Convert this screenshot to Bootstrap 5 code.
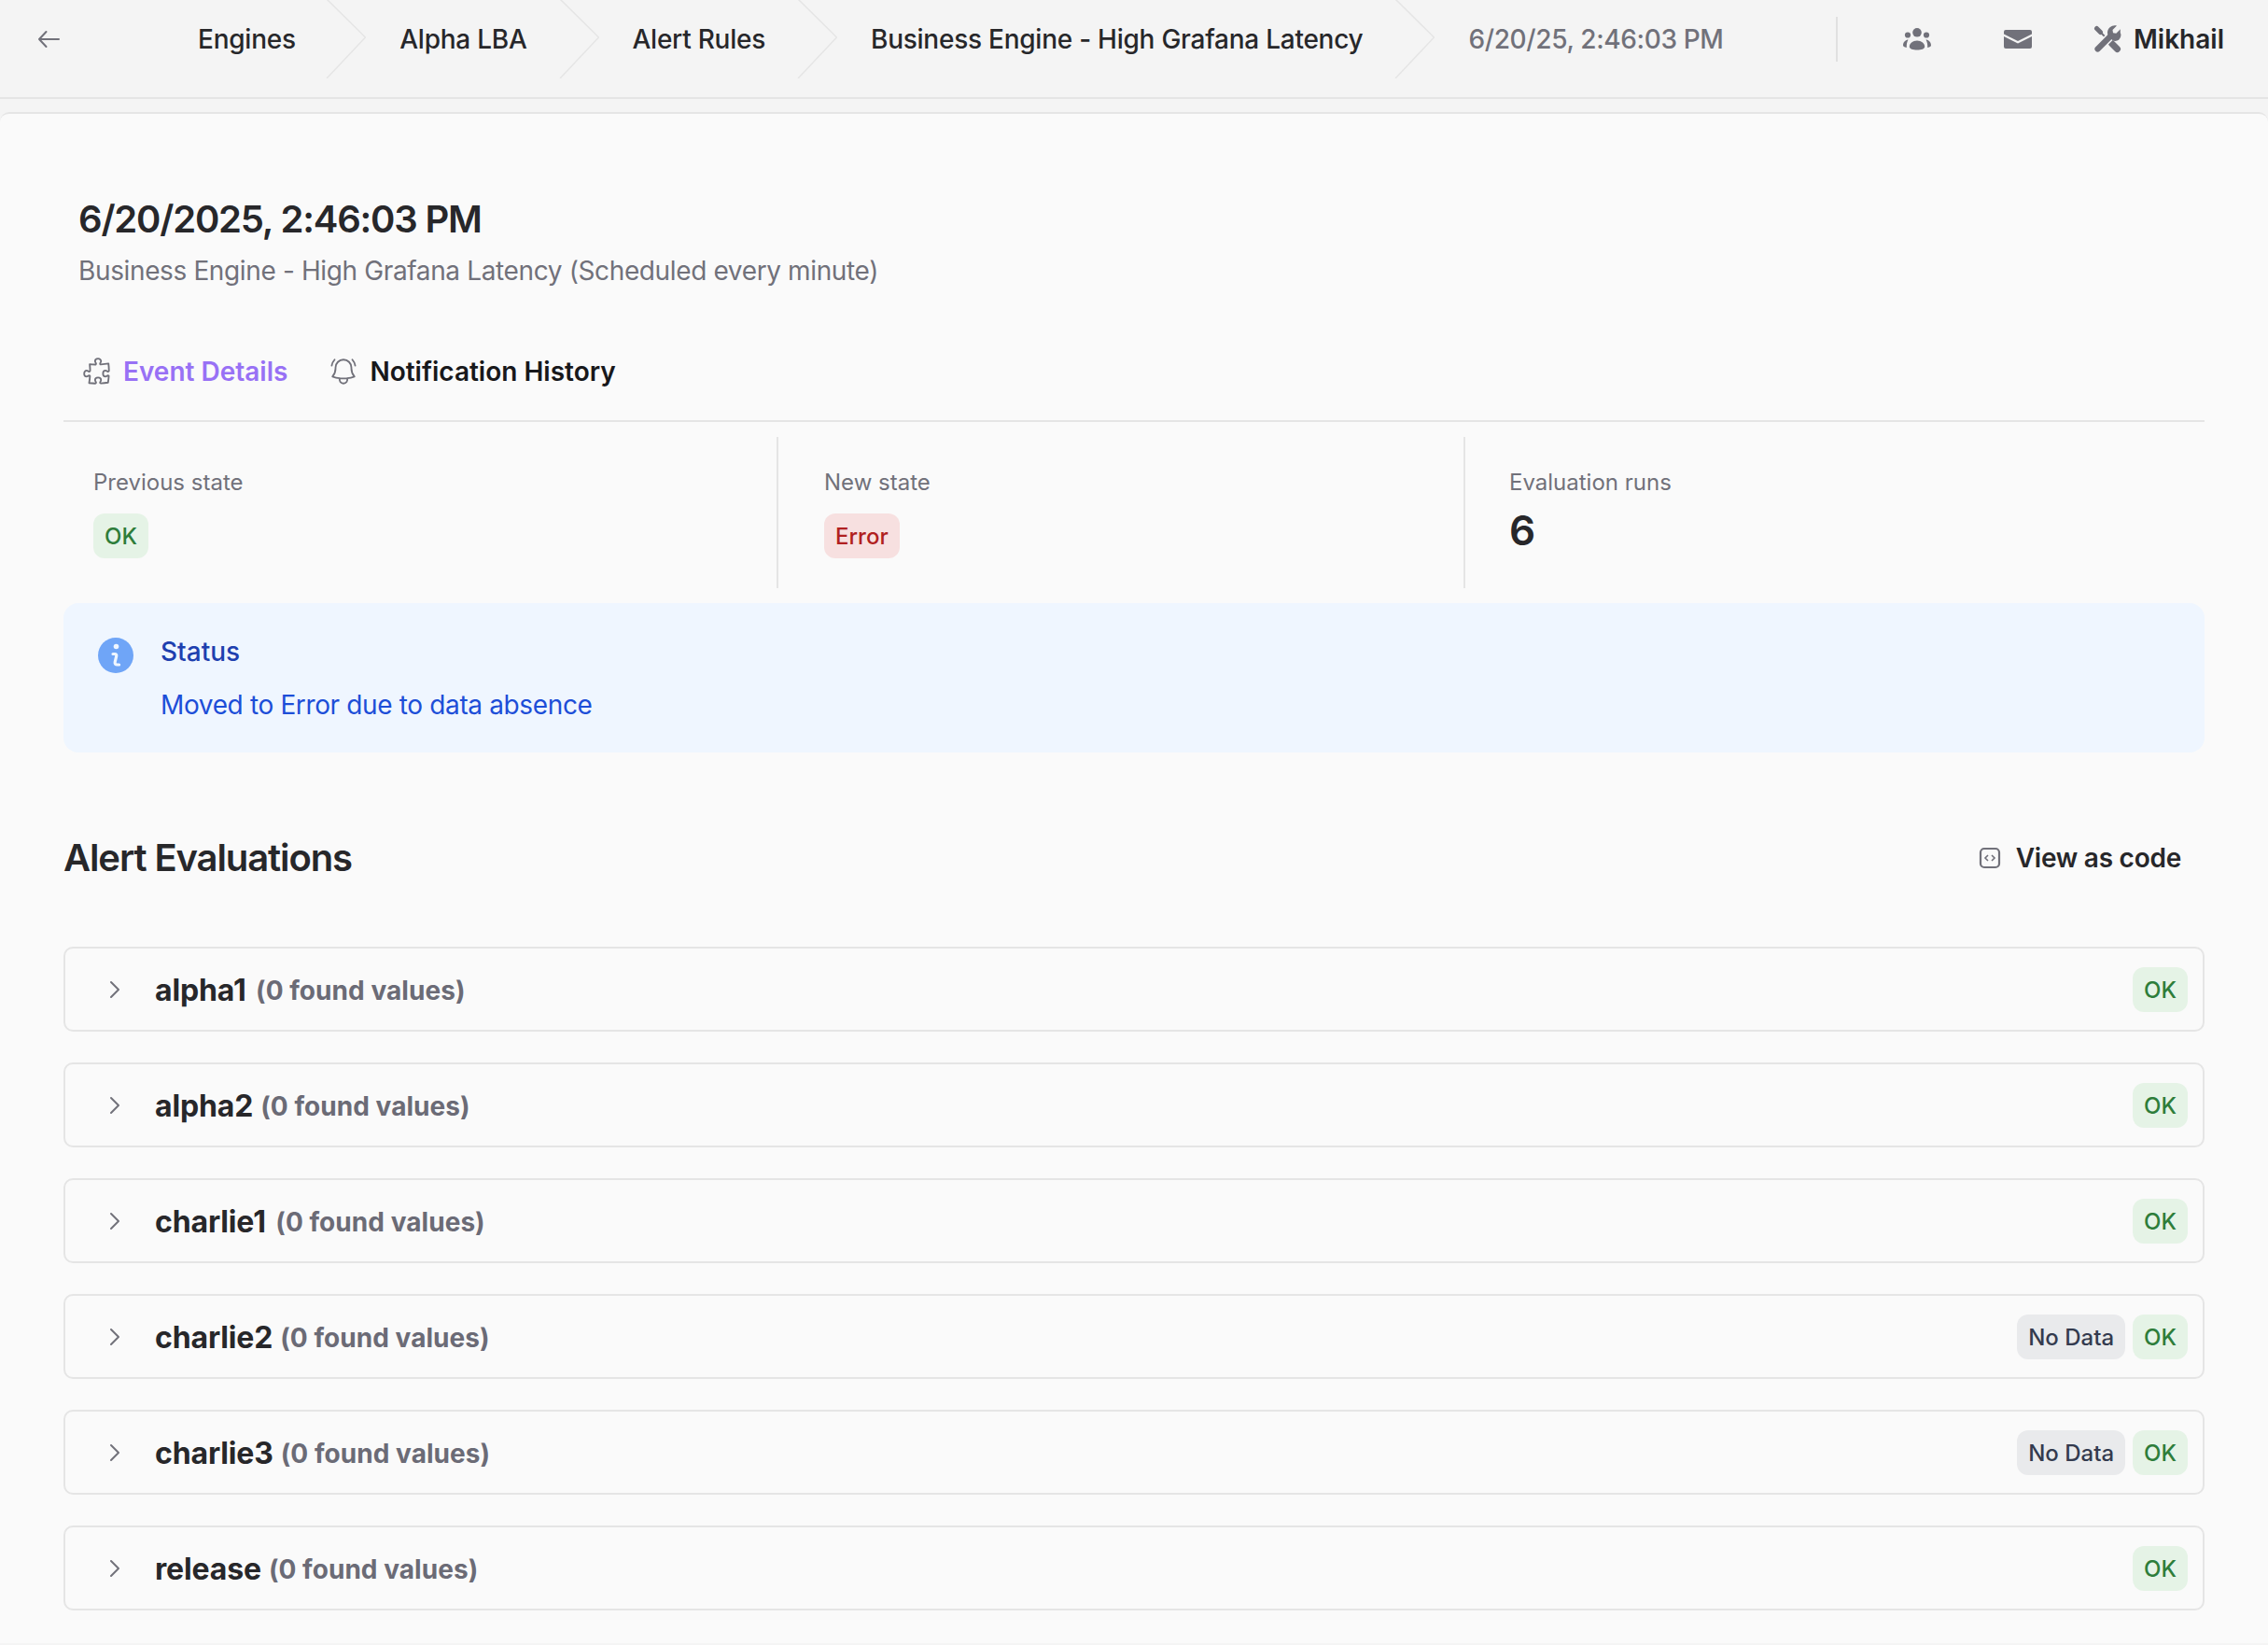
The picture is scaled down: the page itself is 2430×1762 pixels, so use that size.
<!doctype html>
<html lang="en">
<head>
<meta charset="utf-8">
<title>Alert event</title>
<link href="https://cdn.jsdelivr.net/npm/bootstrap@5.3.0/dist/css/bootstrap.min.css" rel="stylesheet">
<style>
html,body{height:100%}
body{background:#f4f4f4;font-family:Inter,"Liberation Sans",sans-serif;color:#27272a;font-size:28px;overflow:hidden}
.topbar{height:106px;border-bottom:2px solid #e5e5e5;padding-left:40px;padding-bottom:21px;font-weight:500;line-height:40px;letter-spacing:-.25px}
.back-ico{width:24px;height:20px;margin-right:148px;color:#71717a}
.crumb-first{margin-right:-1.500px}
.crumb-sep{width:45px;height:85px;margin:0 36px 0 32px;color:#e5e5e5;flex:none}
.crumb-now{color:#71717a;letter-spacing:-.37px}
.bar-rule{width:2px;height:48px;background:#e0e0e0;margin:0 70px 0 auto}
.bar-ico{color:#71717a;flex:none}
.ico-mail{margin-left:78px}
.ico-tools{margin-left:66px}
.bar-user{margin:0 47px 0 13px;font-weight:600;letter-spacing:0}
.strip{height:14px}
.sheet{background:#fafafa;border-top:2px solid #e5e5e5;border-radius:10px 10px 0 0;padding:85px 68px 0;min-height:1640px}
.ev-title{font-size:40px;line-height:56px;font-weight:600;letter-spacing:-1.2px;margin:0 0 7px 16px;color:#27272a}
.ev-sub{line-height:40px;letter-spacing:-.37px;margin:0 0 68px 16px;color:#71717a}
.tabbar{border-bottom:2px solid #e5e5e5;padding:0 0 32px 19px;gap:43px;line-height:40px;font-weight:600}
.tabbar .nav-link{padding:0;color:#18181b;display:flex;align-items:center;gap:11px}
.tabbar .nav-link.active{color:#9871f5}
.tab-ico{color:#71717a}
.stats{margin-top:16px;height:162px}
.stat-a{width:766px;padding:31px 0 0 32px;border-right:2px solid #e5e5e5}
.stat-b{width:736px;padding:31px 0 0 49px;border-right:2px solid #e5e5e5}
.stat-c{padding:31px 0 0 47px}
.stat-lbl{font-size:24px;line-height:36px;color:#71717a;margin-bottom:15px}
.stat-num{font-size:44px;font-weight:600;line-height:36px;color:#27272a;margin-top:1px}
.pill{display:inline-block;height:48px;padding:1px 12px 0;border-radius:12px;font-size:24px;font-weight:500;line-height:48px}
.pill-ok{background:#e5f3e6;color:#2e7d3a}
.pill-err{background:#f7e0e0;color:#b02020}
.pill-none{background:#e9eaec;color:#343b4f}
.info-box{margin:16px 0 0;height:160px;padding:32px 37px;background:#eff6ff;border:0;border-radius:16px;gap:29px;line-height:40px}
.info-ico{width:38px;height:38px;margin-top:5px;flex:none}
.info-head{color:#1e40af;font-weight:500;margin-bottom:17px}
.info-text{color:#1d4ed8;letter-spacing:-.36px}
.sect-head{margin-top:85px;height:56px;padding-right:25px}
.sect-title{font-size:40px;line-height:56px;font-weight:600;letter-spacing:-1.1px;margin:0;color:#27272a}
.code-link{font-weight:600;gap:16px;color:#27272a;line-height:40px;letter-spacing:-.25px}
.rows{margin-top:67px;gap:33px}
.eval-row{height:91px;background:#fafafa;border:2px solid #e5e5e5;border-radius:10px;padding:0 16px 0 47px;flex-direction:row;align-items:center}
.chev{width:12px;height:20px;margin-right:37px;color:#71717a;flex:none}
.eval-name{font-size:32px;font-weight:700;letter-spacing:-.15px;color:#27272a;line-height:44px;margin-top:2px}
.eval-name-one{margin-right:2.500px}
.eval-count{font-size:28px;font-weight:650;letter-spacing:.05px;color:#6b6b76;margin:2px 0 0 8px;line-height:44px}
.pills{gap:8px}
</style>
</head>
<body>
<header class="topbar d-flex align-items-center">
  <svg class="back-ico flex-none" viewBox="0 0 24 20" fill="none" stroke="currentColor" stroke-width="2" stroke-linecap="round" stroke-linejoin="round"><path d="M23 10H2M9.500 2 2 10l7.500 8"/></svg>
  <span class="crumb-first">Engines</span>
  <svg class="crumb-sep" viewBox="0 0 45 85" fill="none" stroke="currentColor" stroke-width="1.500"><path d="M3 0l41.500 41-41.500 44"/></svg>
  <span>Alpha LBA</span>
  <svg class="crumb-sep" viewBox="0 0 45 85" fill="none" stroke="currentColor" stroke-width="1.500"><path d="M3 0l41.500 41-41.500 44"/></svg>
  <span>Alert Rules</span>
  <svg class="crumb-sep" viewBox="0 0 45 85" fill="none" stroke="currentColor" stroke-width="1.500"><path d="M3 0l41.500 41-41.500 44"/></svg>
  <span>Business Engine - High Grafana Latency</span>
  <svg class="crumb-sep" viewBox="0 0 45 85" fill="none" stroke="currentColor" stroke-width="1.500"><path d="M3 0l41.500 41-41.500 44"/></svg>
  <span class="crumb-now">6/20/25, 2:46:03 PM</span>
  <span class="bar-rule"></span>
  <svg class="bar-ico" width="30" height="24" viewBox="0 0 30 24" fill="currentColor"><circle cx="15" cy="4.800" r="4.800"/><circle cx="5" cy="7.500" r="3.100"/><circle cx="25" cy="7.500" r="3.100"/><path d="M6.800 20c0-3.500 3.500-6.500 8.200-6.500s8.200 3 8.200 6.500c0 2.500-4 3.500-8.200 3.500S6.800 22.500 6.800 20z"/><path d="M5.500 12.500C3 12.500 0 15 0 18.500c0 1 1.200 2 3.800 2.500C3.700 18 4 15 5.500 12.500zM24.500 12.500C27 12.500 30 15 30 18.500c0 1-1.200 2-3.800 2.500C26.300 18 26 15 24.500 12.500z"/></svg>
  <svg class="bar-ico ico-mail" width="30" height="20" viewBox="0 0 30 20" fill="currentColor"><path d="M2 0h26a2 2 0 0 1 2 2v2.500L15 12 0 4.500V2a2 2 0 0 1 2-2zM0 7l15 7.500L30 7v11a2 2 0 0 1-2 2H2a2 2 0 0 1-2-2z"/></svg>
  <svg class="bar-ico ico-tools" width="30" height="30" viewBox="0 0 30 30" fill="none" stroke-linecap="round"><path d="M3.500 3.500 7.500 7.500" stroke="currentColor" stroke-width="5"/><path d="M7 7 16 16" stroke="currentColor" stroke-width="2"/><path d="M19.500 19.500 25.500 25.500" stroke="currentColor" stroke-width="7"/><path d="M4.500 25.500 18 12" stroke="#f4f4f4" stroke-width="9.500"/><path d="M4.500 25.500 18 12" stroke="currentColor" stroke-width="6.200"/><path fill="currentColor" d="M28.800 4.200 24.300 8.800l-3.300-.5-.5-3.300L25 .6C20.300-.6 15.500 2.500 15 7.500c-.1 1.500.2 2.800.8 4l5 5c1.500.6 3 .6 4.500.1 3.800-1.300 5-6.500 3.500-8.400z"/></svg>
  <span class="bar-user">Mikhail</span>
</header>
<div class="strip"></div>
<main class="sheet">
  <h1 class="ev-title">6/20/2025, 2:46:03 PM</h1>
  <p class="ev-sub">Business Engine - High Grafana Latency (Scheduled every minute)</p>

  <nav class="nav tabbar">
    <a class="nav-link active" href="#"><svg class="tab-ico" width="34" height="34" viewBox="0 0 24 24" fill="none" stroke="currentColor" stroke-width="1.300" stroke-linecap="round" stroke-linejoin="round"><path d="M14.250 6.087c0-.355.186-.676.401-.959.221-.29.349-.634.349-1.003 0-1.036-1.007-1.875-2.250-1.875s-2.250.84-2.250 1.875c0 .369.128.713.349 1.003.215.283.401.604.401.959v0a.64.64 0 01-.657.643 48.390 48.390 0 01-4.163-.3c.186 1.613.293 3.250.315 4.907a.656.656 0 01-.658.663v0c-.355 0-.676-.186-.959-.401a1.647 1.647 0 00-1.003-.349c-1.036 0-1.875 1.007-1.875 2.250s.84 2.250 1.875 2.250c.369 0 .713-.128 1.003-.349.283-.215.604-.401.959-.401v0c.31 0 .555.26.532.57a48.039 48.039 0 01-.642 5.056c1.518.19 3.058.309 4.616.354a.64.64 0 00.657-.643v0c0-.355-.186-.676-.401-.959a1.647 1.647 0 01-.349-1.003c0-1.035 1.008-1.875 2.250-1.875 1.243 0 2.250.84 2.250 1.875 0 .369-.128.713-.349 1.003-.215.283-.4.604-.4.959v0c0 .333.277.599.61.58a48.100 48.100 0 005.427-.63 48.050 48.050 0 00.582-4.717.532.532 0 00-.533-.57v0c-.355 0-.676.186-.959.401-.29.221-.634.349-1.003.349-1.035 0-1.875-1.007-1.875-2.250s.84-2.250 1.875-2.250c.37 0 .713.128 1.003.349.283.215.604.401.96.401v0a.656.656 0 00.658-.663 48.422 48.422 0 00-.37-5.360c-1.886.342-3.810.574-5.766.689a.578.578 0 01-.61-.58v0z"/></svg>Event Details</a>
    <a class="nav-link" href="#"><svg class="tab-ico" width="34" height="34" viewBox="0 0 24 24" fill="none" stroke="currentColor" stroke-width="1.300" stroke-linecap="round" stroke-linejoin="round"><path d="M14.857 17.082a23.848 23.848 0 005.454-1.310A8.967 8.967 0 0118 9.750v-.7V9A6 6 0 006 9v.75a8.967 8.967 0 01-2.312 6.022c1.733.64 3.560 1.085 5.455 1.310m5.714 0a24.255 24.255 0 01-5.714 0m5.714 0a3 3 0 11-5.714 0M3.124 7.500A8.969 8.969 0 015.292 3m13.416 0a8.969 8.969 0 012.168 4.500"/></svg>Notification History</a>
  </nav>

  <section class="stats d-flex">
    <div class="stat-a"><div class="stat-lbl">Previous state</div><span class="pill pill-ok">OK</span></div>
    <div class="stat-b"><div class="stat-lbl">New state</div><span class="pill pill-err">Error</span></div>
    <div class="stat-c"><div class="stat-lbl">Evaluation runs</div><div class="stat-num">6</div></div>
  </section>

  <div class="alert info-box d-flex" role="alert">
    <svg class="info-ico" viewBox="0 0 38 38"><circle cx="19" cy="19" r="19" fill="#6fa5f7"/><circle cx="19.500" cy="9.500" r="2.800" fill="#eff6ff"/><path d="M16 17.500h2q2.200 0 1.700 2.500l-1.500 6q-.5 3 2.400 3h2" fill="none" stroke="#eff6ff" stroke-width="3.200" stroke-linecap="round"/></svg>
    <div><div class="info-head">Status</div><div class="info-text">Moved to Error due to data absence</div></div>
  </div>

  <div class="sect-head d-flex justify-content-between align-items-center">
    <h2 class="sect-title">Alert Evaluations</h2>
    <div class="code-link d-flex align-items-center"><svg width="24" height="24" viewBox="0 0 24 24" fill="none" stroke="#71717a" stroke-width="2.200"><rect x="2" y="2" width="20" height="20" rx="4"/><path stroke-width="1.600" d="M10 9l-3 3 3 3M14 9l3 3-3 3"/></svg>View as code</div>
  </div>

  <div class="rows d-flex flex-column">
    <div class="card eval-row"><svg class="chev" viewBox="0 0 12 20" fill="none" stroke="currentColor" stroke-width="2" stroke-linecap="round" stroke-linejoin="round"><path d="M2 2l8 8-8 8"/></svg><span class="eval-name eval-name-one">alpha1</span><span class="eval-count">(0 found values)</span><div class="pills d-flex ms-auto"><span class="pill pill-ok">OK</span></div></div>
    <div class="card eval-row"><svg class="chev" viewBox="0 0 12 20" fill="none" stroke="currentColor" stroke-width="2" stroke-linecap="round" stroke-linejoin="round"><path d="M2 2l8 8-8 8"/></svg><span class="eval-name">alpha2</span><span class="eval-count">(0 found values)</span><div class="pills d-flex ms-auto"><span class="pill pill-ok">OK</span></div></div>
    <div class="card eval-row"><svg class="chev" viewBox="0 0 12 20" fill="none" stroke="currentColor" stroke-width="2" stroke-linecap="round" stroke-linejoin="round"><path d="M2 2l8 8-8 8"/></svg><span class="eval-name eval-name-one">charlie1</span><span class="eval-count">(0 found values)</span><div class="pills d-flex ms-auto"><span class="pill pill-ok">OK</span></div></div>
    <div class="card eval-row"><svg class="chev" viewBox="0 0 12 20" fill="none" stroke="currentColor" stroke-width="2" stroke-linecap="round" stroke-linejoin="round"><path d="M2 2l8 8-8 8"/></svg><span class="eval-name">charlie2</span><span class="eval-count">(0 found values)</span><div class="pills d-flex ms-auto"><span class="pill pill-none">No Data</span><span class="pill pill-ok">OK</span></div></div>
    <div class="card eval-row"><svg class="chev" viewBox="0 0 12 20" fill="none" stroke="currentColor" stroke-width="2" stroke-linecap="round" stroke-linejoin="round"><path d="M2 2l8 8-8 8"/></svg><span class="eval-name">charlie3</span><span class="eval-count">(0 found values)</span><div class="pills d-flex ms-auto"><span class="pill pill-none">No Data</span><span class="pill pill-ok">OK</span></div></div>
    <div class="card eval-row"><svg class="chev" viewBox="0 0 12 20" fill="none" stroke="currentColor" stroke-width="2" stroke-linecap="round" stroke-linejoin="round"><path d="M2 2l8 8-8 8"/></svg><span class="eval-name">release</span><span class="eval-count">(0 found values)</span><div class="pills d-flex ms-auto"><span class="pill pill-ok">OK</span></div></div>
  </div>
</main>
<script src="https://cdn.jsdelivr.net/npm/bootstrap@5.3.0/dist/js/bootstrap.bundle.min.js"></script>
</body>
</html>
